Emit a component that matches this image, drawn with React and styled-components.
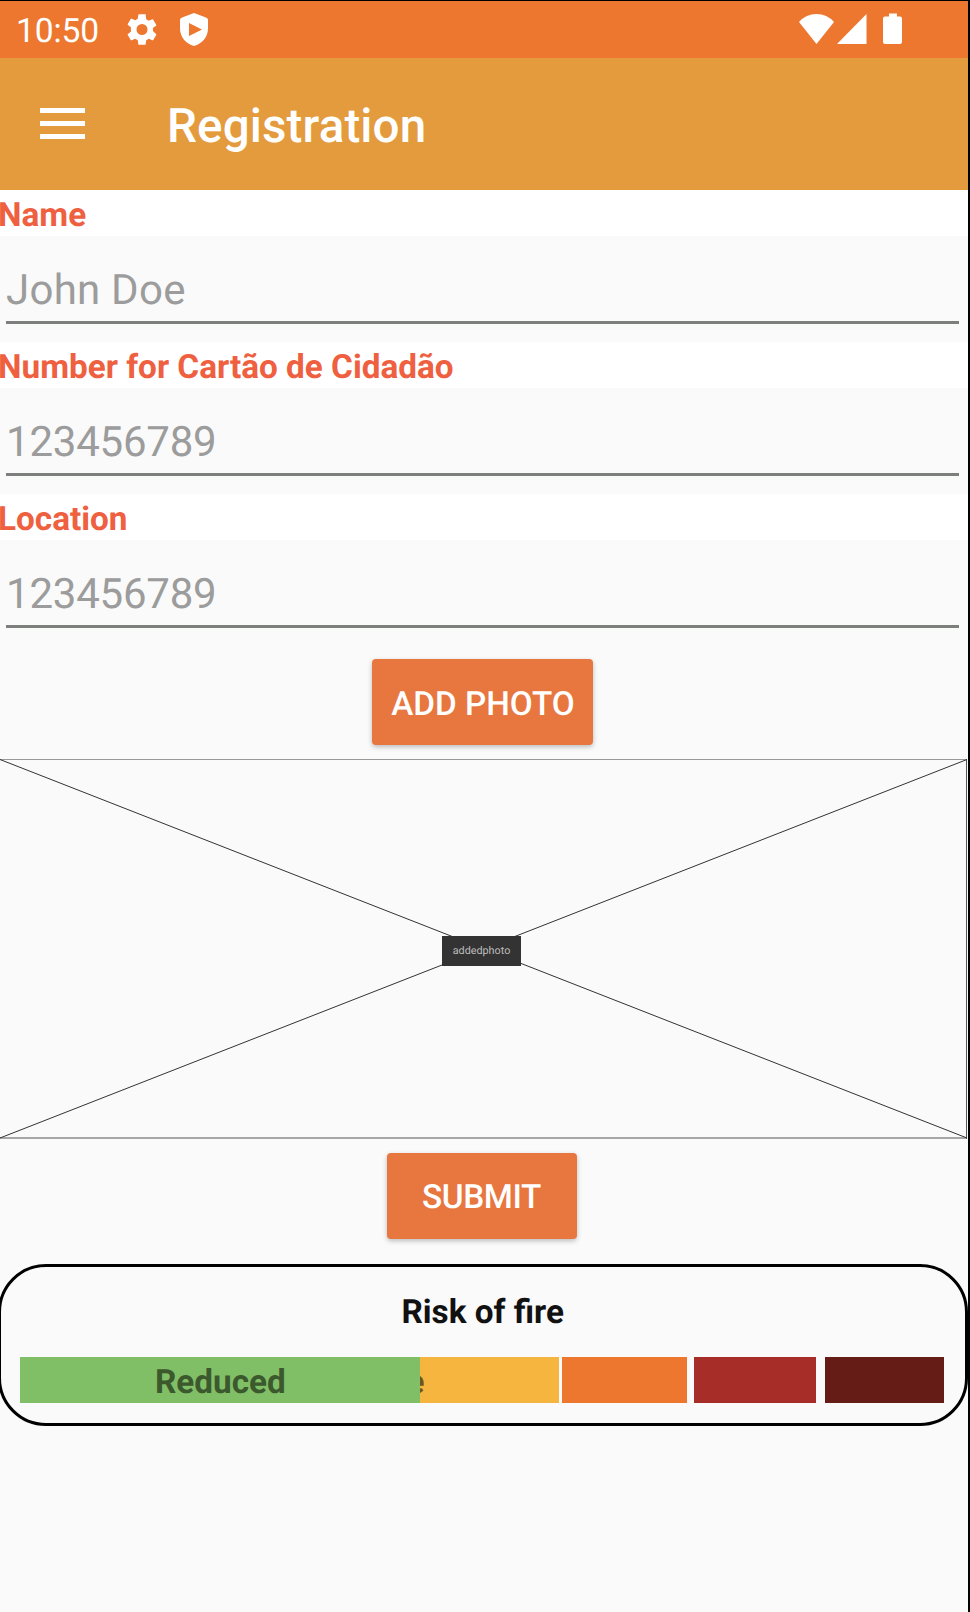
import React from "react";
import styled, { createGlobalStyle } from "styled-components";

const GlobalStyle = createGlobalStyle`
  * { box-sizing: border-box; }
  body {
    margin: 0;
    background: #fafafa;
    font-family: Roboto, sans-serif;
    text-rendering: geometricPrecision;
  }
  input, button { text-rendering: inherit; }
`;

const Screen = styled.div`
  width: 970px;
  height: 1612px;
  display: flex;
  flex-direction: column;
  overflow: hidden;
  background: #fafafa;
  border-top: 1px solid #000;
  border-right: 2px solid #000;
`;

const StatusBar = styled.header`
  flex: none;
  height: 56.5px;
  display: flex;
  align-items: flex-start;
  justify-content: space-between;
  padding: 11px 66px 0 16px;
  background: #ed772f;
  color: #fff;
`;

const StatusGroup = styled.div`
  display: flex;
  align-items: flex-start;
`;

const Clock = styled.time`
  width: 111px;
  font-size: 33.6px;
  line-height: 40px;
  letter-spacing: -0.1px;
  white-space: nowrap;
`;

const StatusIcon = styled.svg`
  display: block;
  fill: #fff;
  margin-left: ${(p) => p.$left || 0}px;
  margin-top: ${(p) => p.$top || 0}px;
`;

const Toolbar = styled.nav`
  flex: none;
  height: 132.5px;
  display: flex;
  align-items: center;
  gap: 82px;
  padding: 5px 0 0 40px;
  background: #e39b3e;
`;

const MenuButton = styled.button`
  width: 45px;
  height: 31px;
  margin-top: -6px;
  padding: 0;
  border: 0;
  background: none;
  display: flex;
  flex-direction: column;
  justify-content: space-between;
`;

const MenuLine = styled.span`
  width: 45px;
  height: 5px;
  background: #fff;
`;

const Title = styled.h1`
  margin: 0;
  color: #fff;
  font-size: 47.5px;
  font-weight: 500;
  line-height: 56px;
  letter-spacing: 0.15px;
`;

const Form = styled.form`
  display: flex;
  flex-direction: column;
  align-items: center;
  width: 965px;
`;

const Field = styled.div`
  width: 968px;
  height: 152px;
  display: flex;
  flex-direction: column;
  align-self: flex-start;
`;

const Label = styled.label`
  height: 46px;
  text-indent: -2px;
  background: #fff;
  color: #ee6040;
  font-size: 33.3px;
  font-weight: 700;
  line-height: 51px;
`;

const Input = styled.input`
  height: 88px;
  margin: 0 9px 0 6px;
  padding: 23px 0 0;
  border: 0;
  border-bottom: 3px solid #7d7f7d;
  border-radius: 0;
  outline: 0;
  background: transparent;
  font-family: inherit;
  font-size: 42px;
  letter-spacing: ${(p) => p.$tracking}px;
  &::placeholder { color: #9c9c9c; opacity: 1; }
`;

const Button = styled.button`
  width: ${(p) => p.$width}px;
  height: 86px;
  margin-top: ${(p) => p.$top}px;
  margin-right: ${(p) => p.$right || 0}px;
  padding: ${(p) => p.$pad || "5px 0 0 1px"};
  border: 0;
  border-radius: 4px;
  background: #e8763f;
  color: #fff;
  font-family: inherit;
  font-size: 33.3px;
  font-weight: 500;
  letter-spacing: ${(p) => p.$tracking || 0}px;
  box-shadow: 0 2px 5px rgba(0, 0, 0, 0.25);
`;

const PhotoFrame = styled.div`
  position: relative;
  align-self: flex-start;
  width: 967px;
  height: 380px;
  margin-top: 14px;
  display: flex;
  align-items: center;
  justify-content: center;
`;

const Cross = styled.svg`
  position: absolute;
  inset: 0;
  fill: none;
  stroke: #333;
  stroke-width: 1;
`;

const PhotoCaption = styled.span`
  position: relative;
  width: 79px;
  height: 30px;
  margin: 4px 4px 0 0;
  background: #333;
  color: #bdbdbd;
  font-size: 10.8px;
  line-height: 29px;
  text-align: center;
`;

const RiskCard = styled.section`
  flex: none;
  width: 970px;
  height: 162px;
  margin: 25px 0 0 -2px;
  padding: 26px 20px 0 19.4px;
  border: 3px solid #000;
  border-radius: 48px;
`;

const RiskTitle = styled.h2`
  margin: 0 0 23.5px;
  color: #111;
  font-size: 33.3px;
  font-weight: 700;
  line-height: 40px;
  text-align: center;
`;

const RiskScale = styled.div`
  display: flex;
  height: 46px;
`;

const RiskLevel = styled.div`
  flex: none;
  width: ${(p) => p.$width}px;
  margin-left: ${(p) => p.$gap || 0}px;
  overflow: hidden;
  background: ${(p) => p.$color};
  color: ${(p) => p.$ink};
  font-size: 33.3px;
  font-weight: 700;
  line-height: 51px;
  text-align: ${(p) => p.$align || "center"};
`;

const ClippedText = styled.span`
  display: block;
  width: 4px;
  direction: rtl;
  white-space: nowrap;
`;

const FIELDS = [
  { id: "name", label: "Name", placeholder: "John Doe", tracking: 0.25 },
  { id: "card", label: "Number for Cartão de Cidadão", placeholder: "123456789", tracking: -0.22 },
  { id: "location", label: "Location", placeholder: "123456789", tracking: -0.22 },
];

export default function App() {
  return (
    <>
      <GlobalStyle />
      <Screen>
        <StatusBar>
          <StatusGroup>
            <Clock>10:50</Clock>
            <StatusIcon $top={2} width="30" height="31" viewBox="2.2 2 19.6 20">
              <path d="M19.14 12.94c.04-.3.06-.61.06-.94s-.02-.64-.07-.94l2.03-1.58a.49.49 0 0 0 .12-.61l-1.92-3.32a.49.49 0 0 0-.59-.22l-2.39.96a7 7 0 0 0-1.62-.94l-.36-2.54A.48.48 0 0 0 13.92 2h-3.84a.48.48 0 0 0-.48.41l-.36 2.54a7 7 0 0 0-1.62.94l-2.39-.96a.49.49 0 0 0-.59.22L2.72 8.47a.48.48 0 0 0 .12.61l2.03 1.58a6 6 0 0 0 0 2.68l-2.03 1.58a.49.49 0 0 0-.12.61l1.92 3.32c.12.22.37.29.59.22l2.39-.96c.5.38 1.03.7 1.62.94l.36 2.54c.05.24.24.41.48.41h3.84c.24 0 .44-.17.47-.41l.36-2.54a7 7 0 0 0 1.62-.94l2.39.96c.22.08.47 0 .59-.22l1.92-3.32a.48.48 0 0 0-.12-.61zM12 15.6A3.6 3.6 0 1 1 12 8.4a3.6 3.6 0 0 1 0 7.2z" />
            </StatusIcon>
            <StatusIcon $left={23} $top={1} width="28" height="33" viewBox="0 0 28 33">
              <path fillRule="evenodd" d="M14 0 26 4.5Q28 5.3 28 7v8.5C28 24 22 31 14 33 6 31 0 24 0 15.5V7q0-1.700 2-2.500ZM9 10v13l13-6.500Z" />
            </StatusIcon>
          </StatusGroup>
          <StatusGroup>
            <StatusIcon $top={1} width="35" height="31" viewBox="0 0 35 31">
              <path d="M0 9Q7 1 17.500 1T35 9L17.500 31Z" />
            </StatusIcon>
            <StatusIcon $left={3} $top={1} width="30" height="31" viewBox="0 0 30 31">
              <path d="M29.500 1V31H0Z" />
            </StatusIcon>
            <StatusIcon $left={16} $top={1} width="19" height="31" viewBox="0 0 19 31">
              <path d="M6 .5h8v3h3q2 0 2 2v23.500q0 2-2 2H2q-2 0-2-2V5.500q0-2 2-2h4Z" />
            </StatusIcon>
          </StatusGroup>
        </StatusBar>
        <Toolbar>
          <MenuButton type="button" aria-label="Menu">
            <MenuLine />
            <MenuLine />
            <MenuLine />
          </MenuButton>
          <Title>Registration</Title>
        </Toolbar>
        <Form>
          {FIELDS.map((f) => (
            <Field key={f.id}>
              <Label htmlFor={f.id}>{f.label}</Label>
              <Input id={f.id} placeholder={f.placeholder} $tracking={f.tracking} />
            </Field>
          ))}
          <Button type="button" $width={221} $top={13}>ADD PHOTO</Button>
          <PhotoFrame>
            <Cross width="967" height="380" viewBox="0 0 967 380">
              <path d="M0 .5H967" stroke="#999" />
              <path d="M0 379H967M966.500 0V380" stroke="#555" />
              <path d="M0 .5L967 379M967 .5L0 379" />
            </Cross>
            <PhotoCaption>addedphoto</PhotoCaption>
          </PhotoFrame>
          <Button type="button" $width={190} $top={14} $right={1} $tracking={-0.4} $pad="3px 1px 0 0">SUBMIT</Button>
        </Form>
        <RiskCard>
          <RiskTitle>Risk of fire</RiskTitle>
          <RiskScale>
            <RiskLevel $width={400} $color="#81bf67" $ink="#3c592e">Reduced</RiskLevel>
            <RiskLevel $width={138.500} $color="#f5b53f" $ink="#73541d" $align="left">
              <ClippedText>e</ClippedText>
            </RiskLevel>
            <RiskLevel $width={125} $gap={3.500} $color="#ed772f" />
            <RiskLevel $width={122} $gap={6.500} $color="#a72d28" />
            <RiskLevel $width={119.500} $gap={9} $color="#651c17" />
          </RiskScale>
        </RiskCard>
      </Screen>
    </>
  );
}
